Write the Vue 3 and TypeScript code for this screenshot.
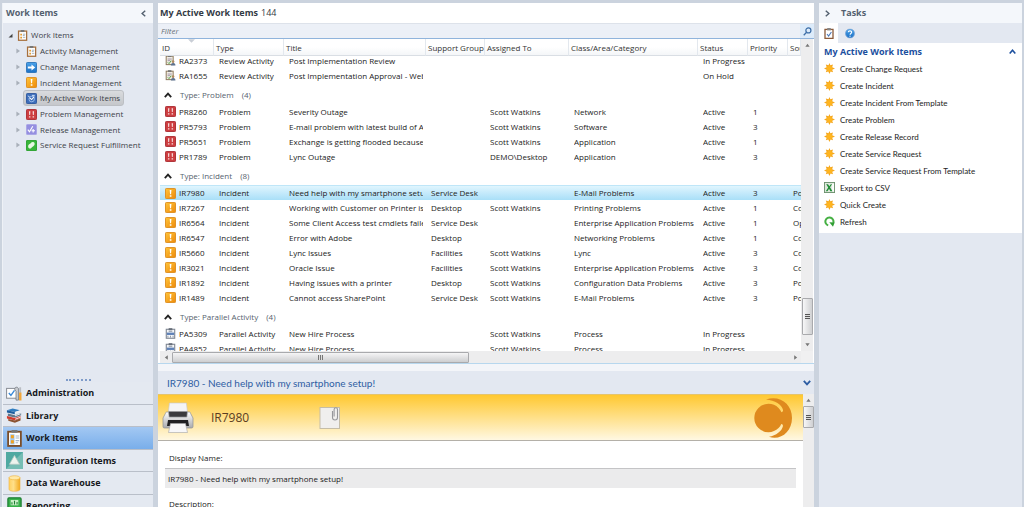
<script setup lang="ts">
import { onMounted, ref } from 'vue'

interface TreeNode { label: string; icon: string; selected?: boolean }
interface WorkItem {
  id: string
  type: string
  title: string
  group?: string
  assigned?: string
  area?: string
  status: string
  priority?: string
  source?: string
  icon: string
  selected?: boolean
}
interface ItemGroup { name: string; count: number; items: WorkItem[] }

const tree: TreeNode[] = [
  { label: 'Activity Management', icon: 'clipboard' },
  { label: 'Change Management', icon: 'change' },
  { label: 'Incident Management', icon: 'incident' },
  { label: 'My Active Work Items', icon: 'mine', selected: true },
  { label: 'Problem Management', icon: 'problem' },
  { label: 'Release Management', icon: 'release' },
  { label: 'Service Request Fulfillment', icon: 'service' },
]

const workspaces = [
  { label: 'Administration', icon: 'admin' },
  { label: 'Library', icon: 'library' },
  { label: 'Work Items', icon: 'workitems', selected: true },
  { label: 'Configuration Items', icon: 'config' },
  { label: 'Data Warehouse', icon: 'warehouse' },
  { label: 'Reporting', icon: 'reporting' },
]

const columns = [
  { key: 'id', label: 'ID' },
  { key: 'type', label: 'Type' },
  { key: 'title', label: 'Title' },
  { key: 'group', label: 'Support Group' },
  { key: 'assigned', label: 'Assigned To' },
  { key: 'area', label: 'Class/Area/Category' },
  { key: 'status', label: 'Status' },
  { key: 'priority', label: 'Priority' },
  { key: 'source', label: 'Source' },
] as const

const sw = 'Scott Watkins'

const groups: ItemGroup[] = [
  {
    name: '',
    count: 0,
    items: [
      { id: 'RA2373', type: 'Review Activity', title: 'Post Implementation Review', status: 'In Progress', icon: 'review' },
      { id: 'RA1655', type: 'Review Activity', title: 'Post Implementation Approval - Web', status: 'On Hold', icon: 'review' },
    ],
  },
  {
    name: 'Problem',
    count: 4,
    items: [
      { id: 'PR8260', type: 'Problem', title: 'Severity Outage', assigned: sw, area: 'Network', status: 'Active', priority: '1', icon: 'problem' },
      { id: 'PR5793', type: 'Problem', title: 'E-mail problem with latest build of App', assigned: sw, area: 'Software', status: 'Active', priority: '3', icon: 'problem' },
      { id: 'PR5651', type: 'Problem', title: 'Exchange is getting flooded because', assigned: sw, area: 'Application', status: 'Active', priority: '1', icon: 'problem' },
      { id: 'PR1789', type: 'Problem', title: 'Lync Outage', assigned: 'DEMO\\Desktop', area: 'Application', status: 'Active', priority: '3', icon: 'problem' },
    ],
  },
  {
    name: 'Incident',
    count: 8,
    items: [
      { id: 'IR7980', type: 'Incident', title: 'Need help with my smartphone setup!', group: 'Service Desk', area: 'E-Mail Problems', status: 'Active', priority: '3', source: 'Portal', icon: 'incident', selected: true },
      { id: 'IR7267', type: 'Incident', title: 'Working with Customer on Printer issue', group: 'Desktop', assigned: sw, area: 'Printing Problems', status: 'Active', priority: '1', source: 'Console', icon: 'incident' },
      { id: 'IR6564', type: 'Incident', title: 'Some Client Access test cmdlets failed', group: 'Service Desk', area: 'Enterprise Application Problems', status: 'Active', priority: '1', source: 'Operations', icon: 'incident' },
      { id: 'IR6547', type: 'Incident', title: 'Error with Adobe', group: 'Desktop', area: 'Networking Problems', status: 'Active', priority: '1', source: 'Console', icon: 'incident' },
      { id: 'IR5660', type: 'Incident', title: 'Lync Issues', group: 'Facilities', assigned: sw, area: 'Lync', status: 'Active', priority: '3', source: 'Console', icon: 'incident' },
      { id: 'IR3021', type: 'Incident', title: 'Oracle Issue', group: 'Facilities', assigned: sw, area: 'Enterprise Application Problems', status: 'Active', priority: '3', source: 'Console', icon: 'incident' },
      { id: 'IR1892', type: 'Incident', title: 'Having issues with a printer', group: 'Desktop', assigned: sw, area: 'Configuration Data Problems', status: 'Active', priority: '3', source: 'Portal', icon: 'incident' },
      { id: 'IR1489', type: 'Incident', title: 'Cannot access SharePoint', group: 'Service Desk', assigned: sw, area: 'E-Mail Problems', status: 'Active', priority: '3', source: 'Portal', icon: 'incident' },
    ],
  },
  {
    name: 'Parallel Activity',
    count: 4,
    items: [
      { id: 'PA5309', type: 'Parallel Activity', title: 'New Hire Process', assigned: sw, area: 'Process', status: 'In Progress', icon: 'parallel' },
      { id: 'PA4852', type: 'Parallel Activity', title: 'New Hire Process', assigned: sw, area: 'Process', status: 'In Progress', icon: 'parallel' },
    ],
  },
]

const tasks = [
  { label: 'Create Change Request', icon: 'star' },
  { label: 'Create Incident', icon: 'star' },
  { label: 'Create Incident From Template', icon: 'star' },
  { label: 'Create Problem', icon: 'star' },
  { label: 'Create Release Record', icon: 'star' },
  { label: 'Create Service Request', icon: 'star' },
  { label: 'Create Service Request From Template', icon: 'star' },
  { label: 'Export to CSV', icon: 'excel' },
  { label: 'Quick Create', icon: 'star' },
  { label: 'Refresh', icon: 'refresh' },
]

const filter = ref('')
const displayName = ref('IR7980 - Need help with my smartphone setup!')
const grid = ref<HTMLElement | null>(null)

onMounted(() => {
  if (grid.value) grid.value.scrollTop = 3
})
</script>

<template>
  <svg class="defs" aria-hidden="true">
    <defs>
      <linearGradient id="g-orange" x1="0" y1="0" x2="1" y2="1"><stop offset="0" stop-color="#ffc53a" /><stop offset="1" stop-color="#ee8a0a" /></linearGradient>
      <linearGradient id="g-blue" x1="0" y1="0" x2="0" y2="1"><stop offset="0" stop-color="#4ba3ea" /><stop offset="1" stop-color="#1b6fc4" /></linearGradient>
      <linearGradient id="g-printer" x1="0" y1="0" x2="0" y2="1"><stop offset="0" stop-color="#ffffff" /><stop offset="1" stop-color="#a9aaad" /></linearGradient>
      <linearGradient id="g-drum" x1="0" y1="0" x2="1" y2="0"><stop offset="0" stop-color="#ffd060" /><stop offset="0.4" stop-color="#ffe08a" /><stop offset="1" stop-color="#f2a91e" /></linearGradient>
    </defs>
    <symbol id="i-clipboard" viewBox="0 0 12 12">
      <rect x="1.7" y="1.2" width="8.8" height="10" fill="#fdfdfd" stroke="#a66f3d" stroke-width="1.4" />
      <rect x="4" y="0" width="4" height="2.2" fill="#777" />
      <path d="M3.6 4h1.8v2H3.6zM3.6 7.4h1.8v2H3.6z" fill="#e39a2d" /><path d="M6.4 4.6h2.6M6.4 6h2M6.4 8h2.6" stroke="#8799ac" stroke-width=".8" />
    </symbol>
    <symbol id="i-workitems" viewBox="0 0 14 16">
      <rect x="1" y="1.6" width="12" height="13.4" fill="#fff" stroke="#7b4d27" stroke-width="1.7" />
      <rect x="4" y="0" width="6" height="2.6" rx="1" fill="#777" />
      <rect x="3" y="4" width="4" height="9.6" fill="#9fc6ef" /><rect x="3.6" y="4.8" width="2.8" height="3" fill="#f0a222" /><rect x="3.6" y="9.6" width="2.8" height="3" fill="#f0a222" />
      <path d="M8 5.6h3.4M8 7.6h3.4M8 10h3.4M8 12h2.4" stroke="#a5b4c4" />
    </symbol>
    <symbol id="i-change" viewBox="0 0 12 12"><rect x=".5" y=".5" width="11" height="11" rx="1" fill="url(#g-blue)" stroke="#2a72b8" /><path d="M2 4.8h4V2.6L10 6 6 9.4V7.2H2z" fill="#fff" /></symbol>
    <symbol id="i-incident" viewBox="0 0 12 12"><rect x=".5" y=".5" width="11" height="11" rx="1" fill="url(#g-orange)" stroke="#dc8a1a" /><path d="M5.1 2.2h1.9l-.4 4.5H5.5zM5.2 7.8H7v1.7H5.2z" fill="#fff" /></symbol>
    <symbol id="i-problem" viewBox="0 0 12 12"><rect x=".5" y=".5" width="11" height="11" rx="1" fill="#cd3e40" stroke="#a9292e" /><path d="M3.2 2.4h1.6l-.3 4.2h-1zM3.2 7.8h1.6v1.5H3.2zM7.2 2.4h1.6l-.3 4.2h-1zM7.2 7.8h1.6v1.5H7.2z" fill="#f6dcdc" /></symbol>
    <symbol id="i-mine" viewBox="0 0 12 12"><rect x=".5" y=".5" width="11" height="11" rx="1" fill="#3c6dba" stroke="#2c559c" /><path d="M2 3.2l2 1M6.5 2.6h3" fill="none" stroke="#d8e6fa" /><circle cx="6.2" cy="6.6" r="3" fill="none" stroke="#a9c6f0" stroke-width=".9" /><path d="M4 5.2l2.2 2L9 3.8" fill="none" stroke="#fff" stroke-width="1.1" /></symbol>
    <symbol id="i-release" viewBox="0 0 12 12"><rect x=".5" y=".5" width="11" height="11" rx="1" fill="#958fe0" stroke="#a9a4e6" /><path d="M2 6.2l1.8 2.3L7.4 2.4M7.8 5.4v4M6 7.4h3.8" fill="none" stroke="#fff" stroke-width="1.2" /></symbol>
    <symbol id="i-service" viewBox="0 0 12 12"><rect x=".5" y=".5" width="11" height="11" rx=".6" fill="#38b53a" stroke="#27a02b" /><path d="M2.4 7.6C2 6 3 5 4.4 4.2 5.6 3.2 6 2 7.6 2.2 9.4 2.2 9.8 4 9.2 5.4 8.4 7 7 7 6 8.4 5 10 2.8 9.6 2.4 7.6z" fill="#e6f7e2" /></symbol>
    <symbol id="i-review" viewBox="0 0 12 12"><rect x="1.3" y="1.3" width="7.6" height="9.2" fill="#f3efe4" stroke="#8e7a5d" stroke-width="1.1" /><rect x="3.2" y=".2" width="3.8" height="2" fill="#777" /><path d="M2.8 4.4h4.6M2.8 6.2h3" stroke="#879" stroke-width=".8" /><path d="M3 8l1.4 1.4L6.8 6.2" fill="none" stroke="#4a9a3e" /><circle cx="8.8" cy="7.2" r="1.4" fill="#b08a62" /><path d="M6.4 11.4c0-3.4 5-3.4 5 0z" fill="#5d7390" /></symbol>
    <symbol id="i-parallel" viewBox="0 0 12 12"><rect x="1.4" y="1.4" width="9.2" height="9.8" fill="#f6f7f9" stroke="#7f8793" stroke-width="1.2" /><rect x="4" y=".2" width="4" height="2.2" fill="#666d78" /><path d="M2 5h8v2.6H2z" fill="#5f82b8" /><path d="M3.2 8.4v2M6 8.4v2M8.8 8.4v2M4 3.6h4" stroke="#7b8796" stroke-width=".9" /></symbol>
    <symbol id="i-star" viewBox="0 0 12 12"><path d="M6 0l.9 2.5 2.9-.9-.9 2.9L12 6l-3.1 1.3 1 2.8-2.8-.9L6 12 4.7 9.2l-2.7.9.9-2.8L0 6l2.9-1.3L2 1.7l2.9.8z" fill="#f5a820" /><circle cx="6" cy="6" r="3" fill="#ffb51f" /></symbol>
    <symbol id="i-excel" viewBox="0 0 12 12"><rect x=".5" y=".5" width="11" height="11" fill="#dfe8dd" stroke="#6a8f6c" /><path d="M9 1.8h1.8v8.6H9z" fill="#fff" /><path d="M2.4 2.4h2l1.4 2.2 1.6-2.2h1.4L6.6 5.8 9.2 10H7L5.5 7.4 3.8 10H2l2.6-4.1z" fill="#1d8b34" /></symbol>
    <symbol id="i-refresh" viewBox="0 0 12 12"><path d="M4.6 10.2A4.4 4.4 0 1 1 10 7.6" fill="none" stroke="#46b044" stroke-width="2.2" /><path d="M5.8 6.8l5.8.2-1.8 4.8z" fill="#2f9d33" /></symbol>
    <symbol id="i-check" viewBox="0 0 10 11"><rect x="1" y="1.4" width="8" height="9" fill="#fff" stroke="#8a5a3a" stroke-width="1.3" /><rect x="3.2" y="0" width="3.6" height="2.4" fill="#888" /><path d="M3 6l1.6 2 2.8-4" fill="none" stroke="#4b78b8" stroke-width="1.1" /></symbol>
    <symbol id="i-help" viewBox="0 0 10 10"><circle cx="5" cy="5" r="4.5" fill="url(#g-blue)" stroke="#79a5d6" stroke-width=".8" /><path d="M3.2 3.8c.2-2 3.6-1.8 3.5 0 0 1.2-1.6 1.2-1.6 2.4M5 7.2v1.1" fill="none" stroke="#fff" stroke-width="1.1" /></symbol>
    <symbol id="i-admin" viewBox="0 0 18 16"><rect x=".6" y="2.6" width="11" height="10.4" fill="#fff" stroke="#8b9098" stroke-width="1.1" /><path d="M3 7.4l2.2 2.6L9 4.6" fill="none" stroke="#3b8ad8" stroke-width="1.5" /><path d="M9.2 3.6C9 1 12.6.4 13.2 3v12h-2.6V5.8z" fill="#c9ccd1" stroke="#70757c" stroke-width=".8" /><path d="M14 1.4h2v6h-2z" fill="#b9bdc3" /><path d="M13.8 7h2.6v8.4h-2.6z" fill="#f2a63a" /></symbol>
    <symbol id="i-library" viewBox="0 0 18 16"><path d="M1 2.4L7 .6l8 1.8-5.6 2z" fill="#2f7dc0" /><path d="M1 2.4v2.4l8.4 2V4.4z" fill="#1c5d9c" /><path d="M9.4 4.4l5.6-2v2.4l-5.6 2z" fill="#eceff3" /><path d="M2 6l7.4 1.8L16 5.4v2.4l-6.6 2.4L2 8.4z" fill="#62798c" /><path d="M1 8.6l8.4 2 6-2v2.2l-6 2.4-8.4-2z" fill="#d13b2e" /><path d="M2.4 11.6l7 1.8 6-2.4v2.4l-6 2.2-7-2z" fill="#8b5331" /><path d="M9.6 8.3l6-2.2M9.6 12l5.8-2.2" stroke="#fff" stroke-width=".9" /></symbol>
    <symbol id="i-config" viewBox="0 0 18 18"><rect width="18" height="18" fill="#4fa9a1" /><path d="M0 18L18 0v18z" fill="#76bdb4" /><path d="M9 3.6L14.4 13H3.6z" fill="#eef4ee" stroke="#b4c9c2" stroke-width=".8" /></symbol>
    <symbol id="i-warehouse" viewBox="0 0 14 16"><path d="M1.8 2.6v10.8c0 2.6 10.4 2.6 10.4 0V2.6z" fill="url(#g-drum)" stroke="#f0b23a" stroke-width=".5" /><ellipse cx="7" cy="2.6" rx="5.2" ry="1.9" fill="#ffe9a8" stroke="#f0b23a" stroke-width=".6" /></symbol>
    <symbol id="i-reporting" viewBox="0 0 14 16"><rect x=".8" y=".8" width="12.4" height="14.4" rx="1" fill="#38b24a" stroke="#1f7f35" stroke-width="1.2" /><rect x="3.4" y="2.8" width="7.2" height="5" fill="#c9f0c6" /><path d="M4.6 7V5M7 7V3.6M9.4 7V4.6" stroke="#1e7f35" /></symbol>
    <symbol id="i-up" viewBox="0 0 8 8"><path d="M.8 6.2L4 2.6l3.2 3.6" fill="none" stroke="currentColor" stroke-width="1.8" /></symbol>
    <symbol id="i-left" viewBox="0 0 8 8"><path d="M6 .8L2.4 4 6 7.2" fill="none" stroke="currentColor" stroke-width="1.6" /></symbol>
    <symbol id="i-tri" viewBox="0 0 6 6"><path d="M1.4.4L5 3 1.4 5.6z" fill="currentColor" /></symbol>
  </svg>

  <div class="console">
    <aside class="nav">
      <header class="pane-head">
        <h2>Work Items</h2>
        <button class="ghost" aria-label="Collapse navigation"><svg class="chev"><use href="#i-left" /></svg></button>
      </header>
      <ul class="tree">
        <li>
          <button class="node root"><svg class="corner" viewBox="0 0 6 6"><path d="M5.4.8v4.6H.6z" /></svg><svg class="ico"><use href="#i-clipboard" /></svg><span>Work Items</span></button>
          <ul class="branch">
            <li v-for="n in tree" :key="n.label">
              <button class="node" :class="{ selected: n.selected }">
                <svg class="arrow"><use v-if="!n.selected" href="#i-tri" /></svg>
                <span class="pill"><svg class="ico"><use :href="'#i-' + n.icon" /></svg><span>{{ n.label }}</span></span>
              </button>
            </li>
          </ul>
        </li>
      </ul>
      <div class="grip"><i></i></div>
      <nav class="spaces">
        <button v-for="w in workspaces" :key="w.label" :class="{ selected: w.selected }">
          <svg><use :href="'#i-' + w.icon" /></svg><span>{{ w.label }}</span>
        </button>
      </nav>
    </aside>

    <main class="work">
      <section class="list">
        <header class="list-head"><h1>My Active Work Items</h1><span>144</span></header>
        <div class="filter">
          <input v-model="filter" type="text" placeholder="Filter" aria-label="Filter" />
          <button class="search" aria-label="Search"><svg viewBox="0 0 10 10"><circle cx="6" cy="3.8" r="2.8" /><path d="M4 5.8L.8 9.2" /></svg></button>
        </div>
        <div class="grid-box">
          <div ref="grid" class="grid">
            <table>
              <colgroup><col v-for="c in columns" :key="c.key" :class="'c-' + c.key" /></colgroup>
              <thead>
                <tr>
                  <th v-for="c in columns" :key="c.key" scope="col"><svg v-if="c.key === 'id'" class="sort" viewBox="0 0 8 4"><path d="M0 0h8L4 4z" /></svg>{{ c.label }}</th>
                </tr>
              </thead>
              <tbody v-for="g in groups" :key="g.name">
                <tr v-if="g.name" class="group">
                  <th colspan="9" scope="rowgroup"><button><svg><use href="#i-up" /></svg><span>Type: {{ g.name }}</span><span>({{ g.count }})</span></button></th>
                </tr>
                <tr v-for="i in g.items" :key="i.id" :class="{ selected: i.selected }">
                  <td v-for="c in columns" :key="c.key"><div class="cell"><svg v-if="c.key === 'id'" class="ico"><use :href="'#i-' + i.icon" /></svg>{{ i[c.key] }}</div></td>
                </tr>
              </tbody>
            </table>
          </div>
          <div class="vbar">
            <svg class="up"><use href="#i-tri" /></svg>
            <div class="track"><div class="thumb low"><i></i></div></div>
            <svg class="down"><use href="#i-tri" /></svg>
          </div>
          <div class="hbar">
            <svg class="back"><use href="#i-tri" /></svg>
            <div class="track"><div class="thumb"><i></i></div></div>
            <svg><use href="#i-tri" /></svg>
          </div>
          <div class="bar-corner"></div>
        </div>
      </section>

      <section class="detail">
        <header class="detail-head"><h2>IR7980 - Need help with my smartphone setup!</h2><button class="ghost" aria-label="Collapse details"><svg class="flip"><use href="#i-up" /></svg></button></header>
        <div class="detail-body">
          <div class="form-side">
            <div class="banner">
              <svg class="printer" viewBox="0 0 32 32">
                <path d="M7.4 1h17l1.4 12H6z" fill="#f4f4f5" stroke="#c6c6c9" stroke-width=".6" />
                <path d="M6.6 9.6h18.8l.6 5.4H6z" fill="#3b3b3e" />
                <path d="M3.4 11.5c0-1 .8-1.5 1.6-1.5h1.6l.6 5h17.6l.6-5H27c1 0 1.6.5 1.6 1.5L31 16v8.5c0 1-.6 1.5-1.5 1.5h-27C1.600 26 1 25.500 1 24.500V16z" fill="url(#g-printer)" stroke="#8e8f93" stroke-width=".7" />
                <path d="M6 18h20l1 6H5z" fill="#202023" />
                <path d="M8.5 21.5h15l2 9h-19z" fill="#f7f7f8" stroke="#a4a4a8" stroke-width=".6" />
              </svg>
              <strong>IR7980</strong>
              <svg class="note" viewBox="0 0 22 24">
                <rect x="1" y="1.5" width="19.5" height="21" fill="#f0efee" stroke="#c5bda8" />
                <path d="M13.5 5v6.5a2.5 2.5 0 0 0 5 0V3.5a1.7 1.7 0 0 0-3.4 0v7" fill="none" stroke="#96979b" stroke-width="1.1" />
              </svg>
              <svg class="logo" viewBox="0 0 39 40">
                <circle cx="14.5" cy="20" r="14.2" />
                <path d="M12 1.500C26-3 38 6 38 20S26 43 15 38.800C22 37.600 28 33 29 28c0-2-2.500-3-4.500-1.500v-13C26.500 15 29.500 14 29 12 28 6.500 21 2.500 12 1.500z" />
              </svg>
            </div>
            <form class="form" @submit.prevent>
              <label for="display-name">Display Name:</label>
              <input id="display-name" v-model="displayName" type="text" />
              <label for="description">Description:</label>
              <textarea id="description" rows="3"></textarea>
            </form>
          </div>
          <div class="vbar">
            <svg class="up"><use href="#i-tri" /></svg>
            <div class="track"><div class="thumb"><i></i></div></div>
          </div>
        </div>
      </section>
    </main>

    <aside class="tasks">
      <header class="pane-head"><button class="ghost" aria-label="Collapse tasks"><svg class="chev flip"><use href="#i-left" /></svg></button><h2>Tasks</h2></header>
      <div class="tabs">
        <button class="on" aria-label="Tasks"><svg viewBox="0 0 10 11"><use href="#i-check" /></svg></button>
        <button aria-label="Help"><svg viewBox="0 0 10 10"><use href="#i-help" /></svg></button>
      </div>
      <section class="task-list">
        <header><h3>My Active Work Items</h3><button class="ghost" aria-label="Collapse"><svg><use href="#i-up" /></svg></button></header>
        <ul>
          <li v-for="t in tasks" :key="t.label"><a href="#"><svg><use :href="'#i-' + t.icon" /></svg>{{ t.label }}</a></li>
        </ul>
      </section>
    </aside>
  </div>
</template>

<style>
html,
body {
  margin: 0;
  height: 100%;
}
</style>

<style scoped>
* {
  box-sizing: border-box;
}
.defs {
  position: absolute;
  width: 0;
  height: 0;
}
.console {
  display: flex;
  gap: 5px;
  height: 100vh;
  padding: 3px 2px 0 2px;
  overflow: hidden;
  background: #cbd3de;
  color: #222;
  font: 8px/12px 'Open Sans', 'Noto Sans', sans-serif;
}
h1, h2, h3, ul {
  margin: 0;
  padding: 0;
  list-style: none;
}
h1, h2, h3 {
  font-size: 9px;
  line-height: 14px;
  font-weight: 700;
}
button, input, textarea {
  font: inherit;
  color: inherit;
  margin: 0;
  padding: 0;
  border: 0;
  background: none;
  text-align: left;
}
svg {
  flex: none;
}
.ghost {
  display: flex;
}
.ghost svg {
  width: 8px;
  height: 8px;
}
.flip {
  rotate: 180deg;
}
.pane-head {
  display: flex;
  align-items: center;
  flex: none;
  height: 20px;
  padding: 0 6px 0 3px;
  background: #f4f7fb;
  color: #53606f;
}
.pane-head .chev {
  width: 7px;
  height: 7px;
}

/* Navigation */
.nav {
  display: flex;
  flex-direction: column;
  flex: none;
  width: 151px;
  background: #e3e8f1;
  border-left: 1px solid #eef1f6;
}
.nav .pane-head {
  justify-content: space-between;
}
.tree {
  flex: 1;
  padding-top: 4px;
}
.node {
  display: flex;
  align-items: center;
  width: 100%;
  height: 16px;
  color: #3c4148;
  white-space: nowrap;
}
.branch li:nth-child(3n) .node {
  height: 15px;
}
.node.root {
  gap: 3px;
  padding-left: 5px;
}
.corner {
  width: 5px;
  height: 5px;
  margin-right: 1px;
  fill: #444;
}
.arrow {
  width: 6px;
  height: 6px;
  margin-left: 12px;
  color: #a9b0ba;
}
.pill {
  display: flex;
  align-items: center;
  gap: 3px;
  height: 16px;
  margin-left: 2px;
  padding: 0 3px 0 2px;
  border: 1px solid transparent;
  border-radius: 3px;
}
.selected .pill {
  background: linear-gradient(#d9dbde, #c5c7cb);
  border-color: #bcbfc4;
}
.ico {
  width: 11px;
  height: 11px;
}
.grip {
  display: flex;
  align-items: center;
  justify-content: center;
  height: 5px;
}
.grip i {
  width: 25px;
  border-top: 2px dotted #7f9cc9;
}
.spaces {
  display: grid;
  flex: none;
  height: 125px;
  grid-auto-rows: 23px 22px;
  overflow: hidden;
}
.spaces button {
  display: flex;
  align-items: center;
  gap: 3px;
  padding-left: 3px;
  border-bottom: 1px solid #b9bfc9;
  background: #e4e9f1;
  color: #16181c;
  font-size: 9px;
  font-weight: 700;
}
.spaces button.selected {
  background: linear-gradient(#a3c8f3, #79aeea);
}
.spaces svg {
  width: 17px;
  height: 17px;
}

/* Work item list */
.work {
  display: flex;
  flex-direction: column;
  flex: 1;
  min-width: 0;
  background: #f3f5f9;
}
.list {
  display: flex;
  flex-direction: column;
  flex: none;
}
.list-head {
  display: flex;
  align-items: center;
  gap: 3px;
  height: 20px;
  padding-left: 2px;
  background: #fff;
  color: #333b45;
  font-size: 9px;
}
.filter {
  display: flex;
  height: 16px;
  background: #ecf0f7;
  border-top: 1px solid #dde2ea;
  border-bottom: 1px solid #90b4dc;
}
.filter input {
  flex: 1;
  min-width: 0;
  padding-left: 3px;
  font-style: italic;
}
.filter input::placeholder {
  color: #6a7078;
  opacity: 1;
}
.search {
  display: flex;
  align-items: center;
  justify-content: center;
  width: 14px;
  background: #dcebfa;
}
.search svg {
  width: 9px;
  height: 9px;
  fill: none;
  stroke: #3c6ea8;
  stroke-width: 1.4;
}
.grid-box {
  display: grid;
  grid-template: 312px 12px / minmax(0, 1fr) 12px;
  padding: 0 1px 0 2px;
  background: #fff;
  border-bottom: 1px solid #b7d7ee;
}
.grid {
  overflow: hidden;
}
table {
  width: 100%;
  table-layout: fixed;
  border-collapse: separate;
  border-spacing: 0;
}
.c-id { width: 54px; }
.c-type { width: 70px; }
.c-title { width: 142px; }
.c-group { width: 59px; }
.c-assigned { width: 84px; }
.c-area { width: 129px; }
.c-status { width: 50px; }
.c-priority { width: 40px; }
thead th {
  position: sticky;
  top: 0;
  z-index: 1;
  height: 17px;
  padding: 2px 0 0 2px;
  overflow: hidden;
  background: linear-gradient(#fff 50%, #f4f6f8);
  border-right: 1px solid #e3e8ee;
  border-bottom: 1px solid #d9dee4;
  color: #333;
  font-weight: 400;
  text-align: left;
  white-space: nowrap;
}
.sort {
  position: absolute;
  top: 0;
  left: 28px;
  width: 7px;
  height: 4px;
  fill: #c9ced6;
}
td {
  height: 15px;
  padding: 0 3px 0 5px;
}
td:last-child {
  padding-right: 0;
}
.cell {
  display: flex;
  align-items: center;
  gap: 3px;
  height: 15px;
  overflow: hidden;
  white-space: nowrap;
}
tr.selected td {
  background: linear-gradient(#e0f5fe, #a9dff8);
  border-top: 1px solid #bfe6f8;
}
tr.selected .cell {
  height: 14px;
}
.group th {
  height: 21px;
  padding: 3px 0 0 4px;
  color: #56616e;
  font-weight: 400;
  text-align: left;
}
.group button {
  display: flex;
  align-items: center;
  gap: 8px;
}
.group svg {
  width: 8px;
  height: 8px;
  color: #222;
}

/* Scroll bars */
.vbar, .hbar {
  display: flex;
  align-items: center;
  background: #ededee;
  color: #777;
}
.vbar {
  flex-direction: column;
  padding: 4px 0;
}
.vbar > svg, .hbar > svg {
  width: 5px;
  height: 5px;
}
.hbar {
  padding: 0 3px 0 4px;
}
.up { rotate: -90deg; }
.down { rotate: 90deg; }
.back { rotate: 180deg; }
.track {
  flex: 1;
}
.thumb {
  display: flex;
  align-items: center;
  justify-content: center;
  border: 1px solid #a9aaad;
  border-radius: 1px;
}
.thumb i {
  width: 5px;
  height: 5px;
  background: repeating-linear-gradient(#555 0 1px, #ddd 1px 2px);
}
.vbar .track {
  display: flex;
  flex-direction: column;
  width: 11px;
  padding-top: 3px;
}
.vbar .thumb {
  height: 22px;
  background: linear-gradient(90deg, #f7f7f8, #cfd0d2);
}
.vbar .thumb.low {
  height: 37px;
  margin-top: auto;
  margin-bottom: 7px;
}
.hbar .track {
  padding: 0 3px;
}
.hbar .thumb {
  width: 48%;
  height: 11px;
  background: linear-gradient(#f5f5f6, #cdced0);
}
.hbar .thumb i {
  background: repeating-linear-gradient(90deg, #777 0 1px, #ddd 1px 2px);
}
.bar-corner {
  background: #f0f0f1;
}

/* Detail pane */
.detail {
  display: flex;
  flex-direction: column;
  flex: 1;
  min-height: 0;
  padding-top: 7px;
}
.detail-head {
  display: flex;
  align-items: center;
  justify-content: space-between;
  flex: none;
  height: 23px;
  padding: 0 3px 0 9px;
  background: #e3e8f1;
  color: #2d5da3;
}
.detail-head h2 {
  font-family: Lato, 'Open Sans', sans-serif;
  font-size: 10px;
  font-weight: 400;
}
.detail-body {
  display: flex;
  flex: 1;
  min-height: 0;
}
.form-side {
  flex: 1;
  overflow: hidden;
  background: #fff;
}
.banner {
  display: flex;
  align-items: center;
  height: 47px;
  padding: 0 10px 0 4px;
  background: linear-gradient(#ffc830, #fff8e2);
  border-bottom: 1px solid #b4b0a8;
  border-top: 1px solid #e5c46c;
}
.printer {
  width: 32px;
  height: 32px;
}
.banner strong {
  flex: none;
  width: 108px;
  margin-left: 17px;
  color: #5a3c22;
  font-size: 12px;
  line-height: 16px;
  font-weight: 400;
}
.note {
  width: 22px;
  height: 24px;
}
.logo {
  width: 39px;
  height: 40px;
  margin-left: auto;
  fill: #df8a1e;
}
.form {
  display: flex;
  flex-direction: column;
  padding: 11px 7px 0;
}
.form label {
  padding-left: 4px;
}
.form input {
  height: 20px;
  margin: 4px 0 10px;
  padding-left: 3px;
  background: #ebebec;
  border-top: 1px solid #c4c4c6;
}
.form textarea {
  margin-top: 4px;
  background: #ebebec;
  resize: none;
}

/* Tasks */
.tasks {
  flex: none;
  width: 203px;
  background: #e3e8f1;
}
.tasks .pane-head {
  gap: 10px;
  padding-left: 5px;
}
.tabs {
  display: flex;
}
.tabs button {
  display: flex;
  align-items: center;
  justify-content: center;
  width: 19px;
  height: 20px;
}
.tabs .on {
  background: #fff;
}
.tabs button + button {
  width: 24px;
}
.tabs svg {
  width: 10px;
  height: 11px;
}
.task-list {
  padding: 0 6px 3px 5px;
  background: #fff;
}
.task-list header {
  display: flex;
  align-items: center;
  justify-content: space-between;
  height: 17px;
  color: #1b4f9e;
}
.task-list a {
  display: flex;
  align-items: center;
  gap: 5px;
  height: 17px;
  color: #222;
  font-family: Lato, 'Open Sans', sans-serif;
  text-decoration: none;
}
.task-list a svg {
  width: 11px;
  height: 11px;
}
.task-list header svg {
  width: 7px;
  height: 7px;
}
</style>
